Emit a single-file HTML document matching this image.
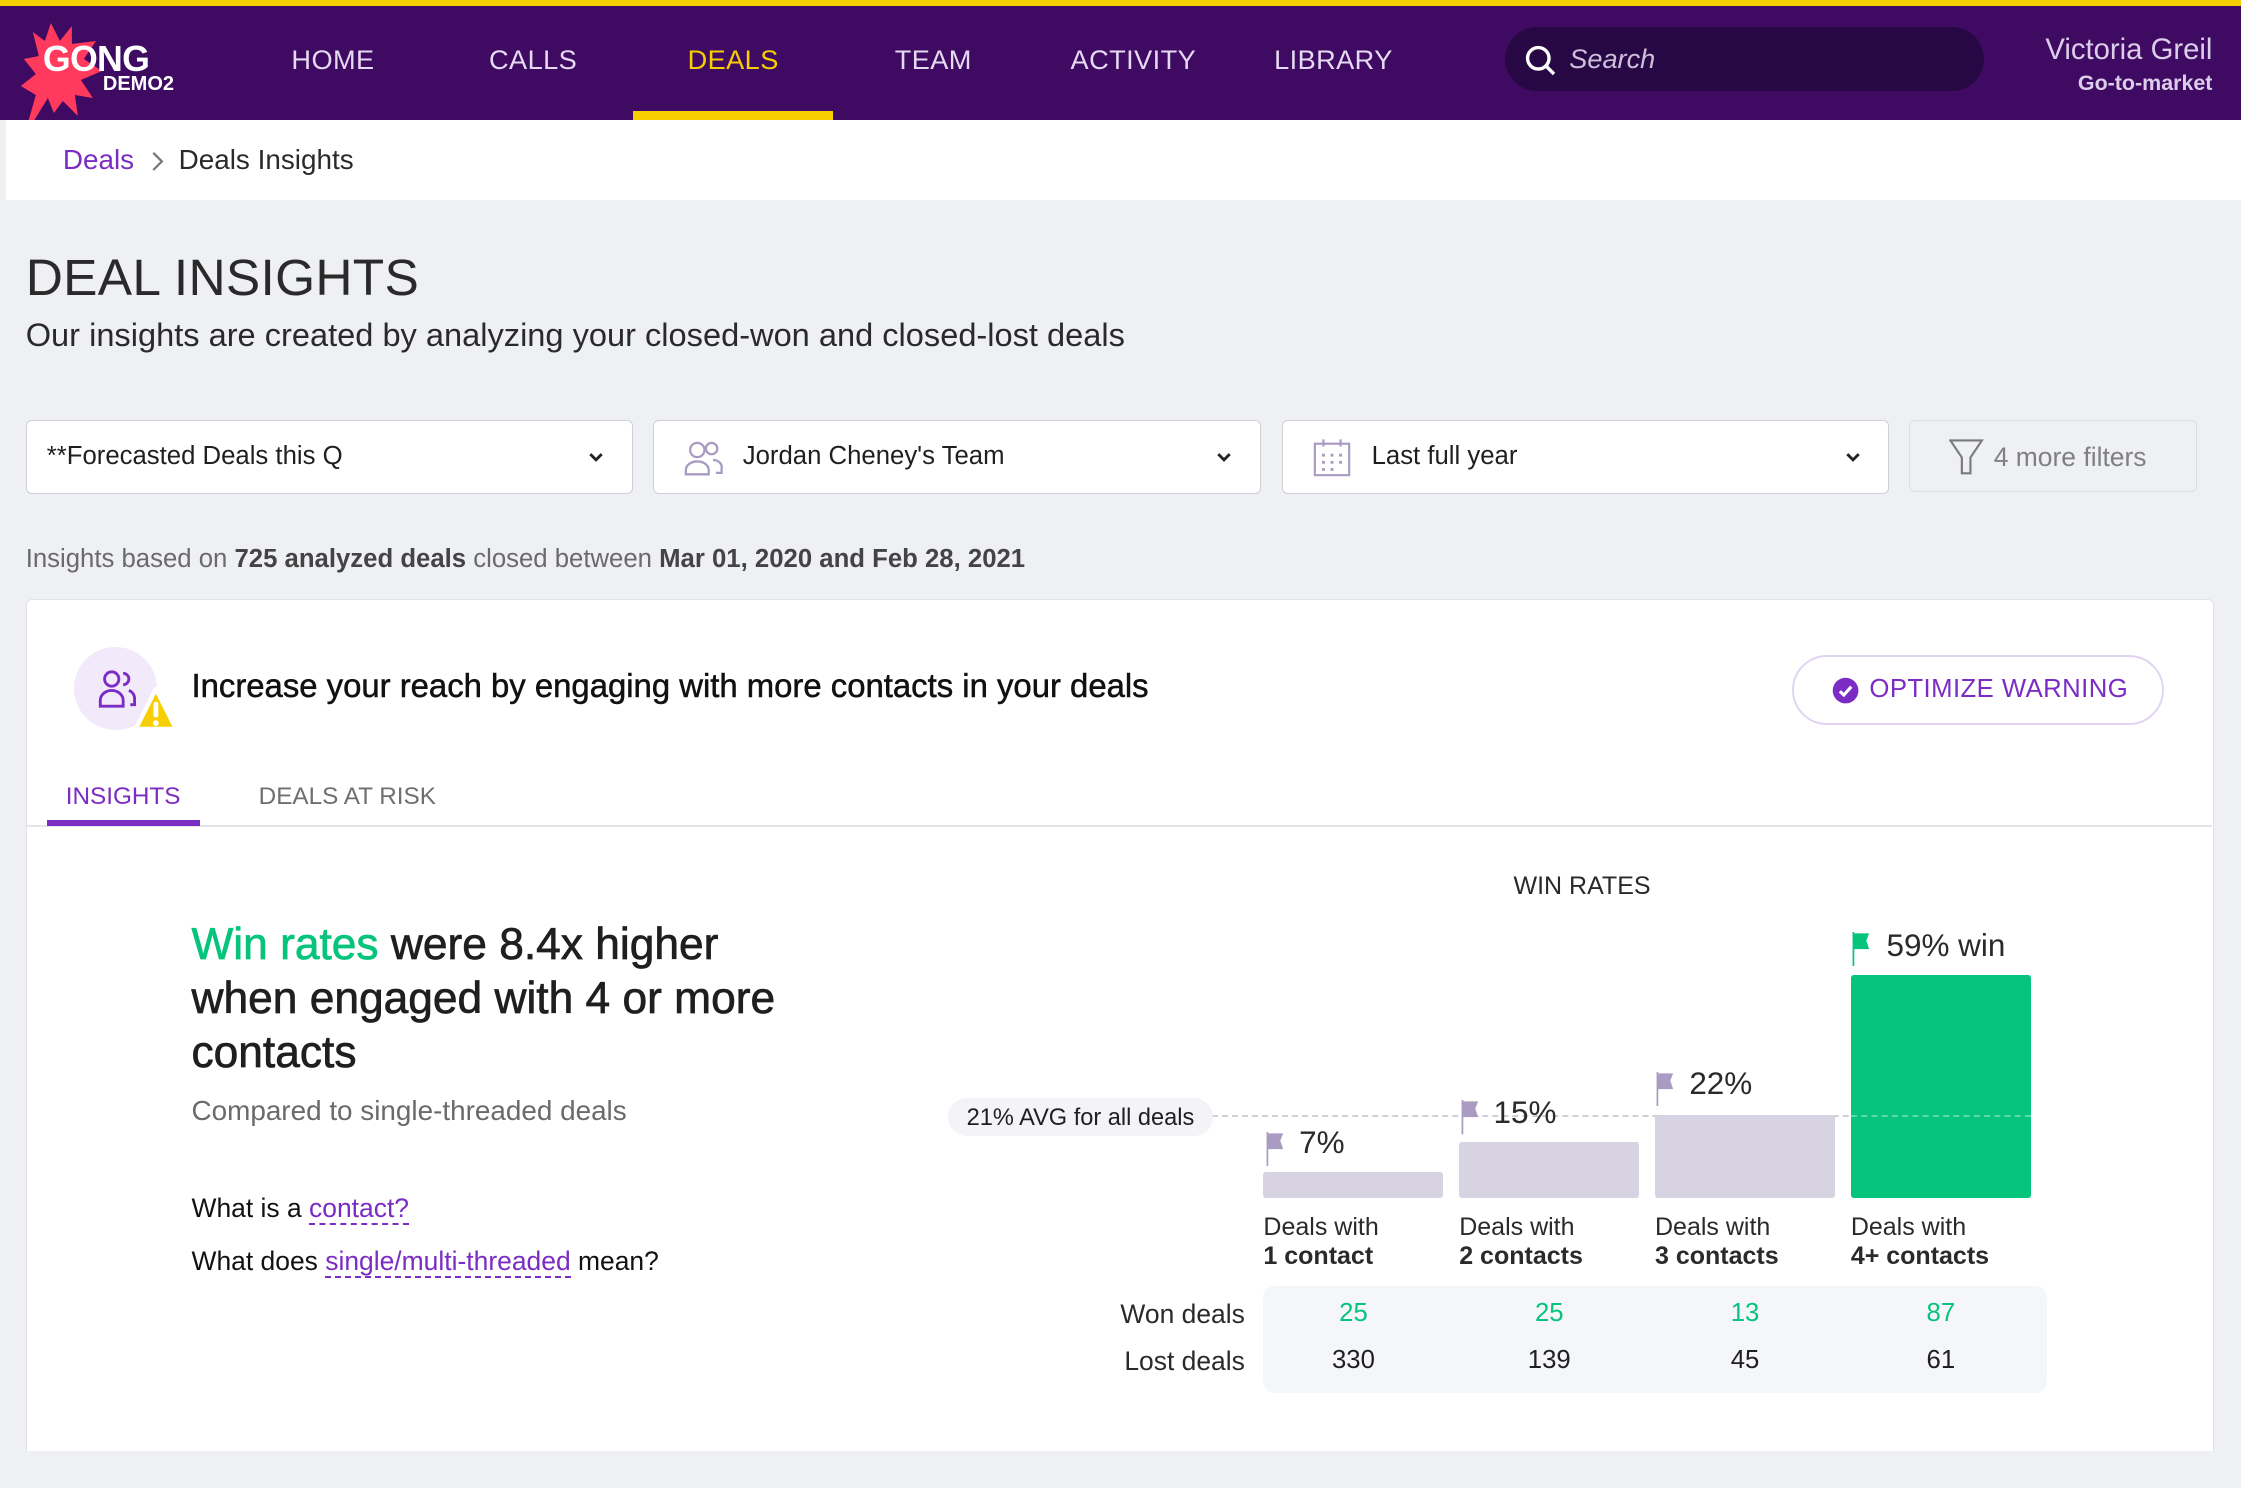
<!DOCTYPE html>
<html><head><meta charset="utf-8">
<style>
*{box-sizing:border-box;margin:0;padding:0}
html,body{width:2241px;height:1488px;overflow:hidden;background:#eff0f4}
body{font-family:"Liberation Sans",Arial,sans-serif;color:#1f1f1f}
#root{zoom:1.4292;width:1568px;height:1041px;position:relative;background:#eff0f4}
.a{position:absolute;white-space:nowrap}
.nav{position:absolute;top:4px;height:80px;width:140px;text-align:center;line-height:76px;font-size:19px;color:#e6d9f2;letter-spacing:.3px}
.dd{position:absolute;top:294px;height:52px;width:425px;background:#fff;border:1px solid #cfcfd6;border-radius:4px;font-size:18px;line-height:50px}
.chev{position:absolute;right:18px;top:18px}
.bar{position:absolute;width:126px;background:#d8d3e2;border-radius:2px}
.pct{position:absolute;font-size:22px;color:#2a2a2a}
.lbl{position:absolute;font-size:17.5px;line-height:20px;color:#2a2a2a}
.num{position:absolute;width:126px;text-align:center;font-size:18px}
</style></head><body><div id="root">
<div class="a" style="left:0;top:0;width:1568px;height:4px;background:#f7cf00"></div>
<div class="a" style="left:0;top:4px;width:1568px;height:80px;background:#3f0b62"></div>
<svg class="a" style="left:14px;top:14px" width="60" height="84" viewBox="0 0 56 80"><polygon points="8,8 16,14 20,2 26,14 34,4 34,16 50,14 42,26 54,34 40,40 48,52 36,50 38,64 28,54 22,62 18,52 2,78 10,50 0,44 10,36 2,26 12,24" fill="#ff3a5c"/></svg>
<div class="a" style="left:30px;top:27px;font-size:25px;font-weight:bold;color:#fff;letter-spacing:-.5px">GONG</div>
<div class="a" style="left:72px;top:51px;font-size:14px;font-weight:bold;color:#fff">DEMO2</div>
<div class="nav" style="left:163px">HOME</div>
<div class="nav" style="left:303px">CALLS</div>
<div class="nav" style="left:443px;color:#f7cf00">DEALS</div>
<div class="a" style="left:443px;top:78px;width:140px;height:6px;background:#f7cf00"></div>
<div class="nav" style="left:583px">TEAM</div>
<div class="nav" style="left:723px">ACTIVITY</div>
<div class="nav" style="left:863px">LIBRARY</div>
<div class="a" style="left:1053px;top:19px;width:335px;height:45px;background:#280844;border-radius:23px"></div>
<svg class="a" style="left:1066px;top:31px" width="24" height="24" viewBox="0 0 24 24"><circle cx="10" cy="10" r="7.5" fill="none" stroke="#fff" stroke-width="2.4"/><line x1="15.5" y1="15.5" x2="21" y2="21" stroke="#fff" stroke-width="2.4"/></svg>
<div class="a" style="left:1098px;top:30px;font-size:19px;font-style:italic;color:#cdbfdc">Search</div>
<div class="a" style="right:20px;top:23px;font-size:20.5px;color:#dccdea;text-align:right">Victoria Greil</div>
<div class="a" style="right:20px;top:50px;font-size:15px;font-weight:600;color:#dccdea;text-align:right">Go-to-market</div>
<div class="a" style="left:4px;top:84px;width:1564px;height:56px;background:#fff"></div>
<div class="a" style="left:44px;top:101px;font-size:19.5px;color:#7b2cc4">Deals</div>
<svg class="a" style="left:104px;top:105px" width="12" height="16" viewBox="0 0 12 16"><polyline points="3,2 9,8 3,14" fill="none" stroke="#777" stroke-width="1.6"/></svg>
<div class="a" style="left:125px;top:101px;font-size:19.5px;color:#2a2a2a">Deals Insights</div>
<div class="a" style="left:18px;top:173px;font-size:36px;color:#2a2a2a;letter-spacing:.2px">DEAL INSIGHTS</div>
<div class="a" style="left:18px;top:222px;font-size:22.8px;color:#2a2a2a">Our insights are created by analyzing your closed-won and closed-lost deals</div>
<div class="dd" style="left:18px"><span style="margin-left:14px">**Forecasted Deals this Q</span><svg class="chev" width="14" height="14" viewBox="0 0 14 14"><polyline points="3,5 7,9 11,5" fill="none" stroke="#222" stroke-width="2"/></svg></div>
<div class="dd" style="left:457px"><svg class="a" style="left:20px;top:13px" width="28" height="26" viewBox="0 0 28 26"><g fill="none" stroke="#a99bc1" stroke-width="1.6"><circle cx="10" cy="7" r="5"/><path d="M2 24v-3a8 6 0 0 1 16 0v3z"/><circle cx="20" cy="6" r="4"/><path d="M21 14a6 5 0 0 1 6 6v3h-4"/></g></svg><span style="margin-left:62px">Jordan Cheney's Team</span><svg class="chev" width="14" height="14" viewBox="0 0 14 14"><polyline points="3,5 7,9 11,5" fill="none" stroke="#222" stroke-width="2"/></svg></div>
<div class="dd" style="left:897px"><svg class="a" style="left:20px;top:12px" width="28" height="28" viewBox="0 0 28 28"><g fill="none" stroke="#a99bc1" stroke-width="1.5"><rect x="2" y="4" width="24" height="22"/><line x1="8" y1="1" x2="8" y2="6"/><line x1="20" y1="1" x2="20" y2="6"/></g><g fill="#a99bc1"><rect x="7" y="11" width="2" height="2"/><rect x="13" y="11" width="2" height="2"/><rect x="19" y="11" width="2" height="2"/><rect x="7" y="16" width="2" height="2"/><rect x="13" y="16" width="2" height="2"/><rect x="19" y="16" width="2" height="2"/><rect x="7" y="21" width="2" height="2"/><rect x="13" y="21" width="2" height="2"/></g></svg><span style="margin-left:62px">Last full year</span><svg class="chev" width="14" height="14" viewBox="0 0 14 14"><polyline points="3,5 7,9 11,5" fill="none" stroke="#222" stroke-width="2"/></svg></div>
<div class="a" style="left:1336px;top:294px;width:201px;height:50px;border:1px solid #dcdce2;border-radius:4px;background:#eff0f4"></div>
<svg class="a" style="left:1364px;top:307px" width="24" height="26" viewBox="0 0 24 26"><path d="M1 1h22l-8 12v11h-6v-11z" fill="none" stroke="#7a7a7a" stroke-width="1.5"/></svg>
<div class="a" style="left:1395px;top:309px;font-size:18.5px;color:#808080">4 more filters</div>
<div class="a" style="left:18px;top:381px;font-size:18px;color:#6a6a6a">Insights based on <b style="color:#444;font-weight:600">725 analyzed deals</b> closed between <b style="color:#444;font-weight:600">Mar 01, 2020 and Feb 28, 2021</b></div>
<div class="a" style="left:18px;top:419px;width:1531px;height:596px;background:#fff;border:1px solid #e2e2e8;border-bottom:none;border-radius:4px 4px 0 0"></div>
<div class="a" style="left:52px;top:453px;width:58px;height:58px;border-radius:50%;background:#f2eafb"></div>
<svg class="a" style="left:67px;top:468px" width="30" height="28" viewBox="0 0 30 28"><g fill="none" stroke="#7b2cc4" stroke-width="2"><circle cx="11" cy="7" r="5"/><path d="M3 26v-4a8 7 0 0 1 16 0v4z"/><path d="M19 3a4 4 0 1 1 0 8"/><path d="M23 15a6 6 0 0 1 4 6v4h-3"/></g></svg>
<svg class="a" style="left:93px;top:480px" width="32" height="34" viewBox="0 0 32 34"><path d="M16 2L30 30H2z" fill="#f7cf00" stroke="#fff" stroke-width="3" stroke-linejoin="round"/><rect x="14.3" y="11" width="3.4" height="11" rx="1.5" fill="#fff"/><circle cx="16" cy="26" r="2" fill="#fff"/></svg>
<div class="a" style="left:134px;top:467px;font-size:23px;color:#111;-webkit-text-stroke:0.35px #111">Increase your reach by engaging with more contacts in your deals</div>
<div class="a" style="left:1254px;top:458px;width:260px;height:49px;border:1.5px solid #e2d3f3;border-radius:25px"></div>
<svg class="a" style="left:1282px;top:474px" width="19" height="19" viewBox="0 0 19 19"><circle cx="9.5" cy="9.5" r="9" fill="#7b2cc4"/><polyline points="5.5,10 8.3,12.6 13.5,6.8" fill="none" stroke="#fff" stroke-width="2.2"/></svg>
<div class="a" style="left:1308px;top:472px;font-size:18px;color:#7b2cc4;letter-spacing:.3px">OPTIMIZE WARNING</div>
<div class="a" style="left:46px;top:548px;font-size:17px;color:#7b2cc4">INSIGHTS</div>
<div class="a" style="left:181px;top:548px;font-size:17px;color:#6f6f6f">DEALS AT RISK</div>
<div class="a" style="left:19px;top:577px;width:1529px;height:2px;background:#e4e4ea"></div>
<div class="a" style="left:33px;top:574px;width:107px;height:4px;background:#7b2cc4"></div>
<div class="a" style="left:134px;top:642px;font-size:31px;line-height:38px;color:#1f1f1f;-webkit-text-stroke:0.5px #1f1f1f;white-space:normal;width:425px"><span style="color:#06c47c;-webkit-text-stroke:0.5px #06c47c">Win rates</span> were 8.4x higher when engaged with 4 or more contacts</div>
<div class="a" style="left:134px;top:766px;font-size:19.5px;color:#6a6a6a">Compared to single-threaded deals</div>
<div class="a" style="left:134px;top:835px;font-size:18.5px;color:#111">What is a <span style="color:#7b2cc4;border-bottom:1.5px dashed #7b2cc4">contact?</span></div>
<div class="a" style="left:134px;top:872px;font-size:18.5px;color:#111">What does <span style="color:#7b2cc4;border-bottom:1.5px dashed #7b2cc4">single/multi-threaded</span> mean?</div>
<div class="a" style="left:1059px;top:610px;font-size:17.5px;color:#2a2a2a">WIN RATES</div>
<div class="a" style="left:848px;top:780px;width:572px;border-top:1.5px dashed #cfcfd6"></div>
<div class="a" style="left:663px;top:768px;width:186px;height:27px;background:#f3f3f8;border-radius:14px;font-size:16.5px;line-height:27px;text-align:center;color:#1f1f1f">21% AVG for all deals</div>
<div class="bar" style="left:884px;top:820px;height:18px"></div>
<div class="bar" style="left:1021px;top:799px;height:39px"></div>
<div class="bar" style="left:1158px;top:780px;height:58px"></div>
<div class="bar" style="left:1295px;top:682px;height:156px;background:#06c47c"></div>
<div class="a" style="left:1295px;top:780px;width:126px;border-top:1.5px dashed rgba(255,255,255,.35)"></div>
<svg class="a" style="left:886px;top:792px" width="18" height="24" viewBox="0 0 18 24"><line x1="1" y1="0" x2="1" y2="24" stroke="#a99bc1" stroke-width="1.2"/><path d="M1 1h11l-2 5 2 6H1z" fill="#a99bc1"/></svg>
<div class="pct" style="left:909px;top:787px">7%</div>
<svg class="a" style="left:1022px;top:770px" width="18" height="24" viewBox="0 0 18 24"><line x1="1" y1="0" x2="1" y2="24" stroke="#a99bc1" stroke-width="1.2"/><path d="M1 1h11l-2 5 2 6H1z" fill="#a99bc1"/></svg>
<div class="pct" style="left:1045px;top:766px">15%</div>
<svg class="a" style="left:1159px;top:750px" width="18" height="24" viewBox="0 0 18 24"><line x1="1" y1="0" x2="1" y2="24" stroke="#a99bc1" stroke-width="1.2"/><path d="M1 1h11l-2 5 2 6H1z" fill="#a99bc1"/></svg>
<div class="pct" style="left:1182px;top:746px">22%</div>
<svg class="a" style="left:1296px;top:652px" width="18" height="24" viewBox="0 0 18 24"><line x1="1" y1="0" x2="1" y2="24" stroke="#06c47c" stroke-width="1.2"/><path d="M1 1h11l-2 5 2 6H1z" fill="#06c47c"/></svg>
<div class="pct" style="left:1320px;top:649px">59% win</div>
<div class="lbl" style="left:884px;top:849px">Deals with<br><b>1 contact</b></div>
<div class="lbl" style="left:1021px;top:849px">Deals with<br><b>2 contacts</b></div>
<div class="lbl" style="left:1158px;top:849px">Deals with<br><b>3 contacts</b></div>
<div class="lbl" style="left:1295px;top:849px">Deals with<br><b>4+ contacts</b></div>
<div class="a" style="left:884px;top:900px;width:548px;height:75px;background:#f5f6fa;border-radius:8px"></div>
<div class="a" style="right:697px;top:909px;font-size:18.5px;color:#2a2a2a">Won deals</div>
<div class="a" style="right:697px;top:942px;font-size:18.5px;color:#2a2a2a">Lost deals</div>
<div class="num" style="left:884px;top:909px;color:#06c47c">25</div>
<div class="num" style="left:1021px;top:909px;color:#06c47c">25</div>
<div class="num" style="left:1158px;top:909px;color:#06c47c">13</div>
<div class="num" style="left:1295px;top:909px;color:#06c47c">87</div>
<div class="num" style="left:884px;top:942px">330</div>
<div class="num" style="left:1021px;top:942px">139</div>
<div class="num" style="left:1158px;top:942px">45</div>
<div class="num" style="left:1295px;top:942px">61</div>
</div></body></html>
